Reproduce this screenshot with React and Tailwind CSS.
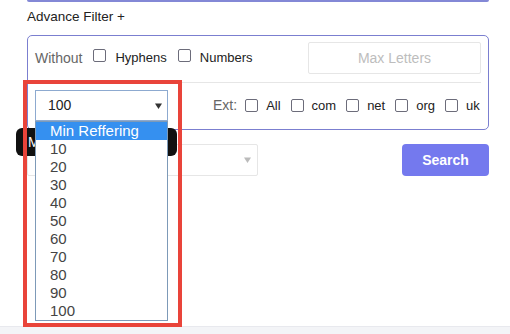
import React from "react";

const exts = ["All", "com", "net", "org", "uk"];
const options = ["Min Reffering", "10", "20", "30", "40", "50", "60", "70", "80", "90", "100"];

function Box() {
  return <span className="inline-block w-[13px] h-[13px] border border-[#6c6c7a] rounded-[2px] bg-white shrink-0" />;
}

function Arrow({ color }) {
  return (
    <svg width="7" height="6" viewBox="0 0 7 6" className="shrink-0">
      <path d="M0 0.5h7L3.5 6z" fill={color} />
    </svg>
  );
}

export default function App() {
  return (
    <div className="relative w-[510px] h-[334px] overflow-hidden bg-white flex flex-col font-['Liberation_Sans',Arial,sans-serif]">
      <div className="flex-1 pl-[27px] pr-[21px]">
        <div className="h-[2px] bg-[#8388d6] rounded-b-[2px]" />
        <div className="mt-[5px] h-[20px] leading-[20px] text-[13.5px] text-[#222]">Advance Filter +</div>

        <div className="mt-[8px] border border-[#7b7fd0] rounded-[5px] pl-[7px] pr-[7px] pt-[6px] pb-[8px]">
          <div className="flex items-center h-[32px] text-[13px]">
            <span className="text-[#666] text-[14px]">Without</span>
            <span className="ml-[11px]"><Box /></span>
            <span className="ml-[9px] text-[#222]">Hyphens</span>
            <span className="ml-[11px]"><Box /></span>
            <span className="ml-[9px] text-[#222]">Numbers</span>
            <div className="ml-auto shrink-0 w-[173px] h-[32px] border border-[#e6e6e6] rounded-[2px] flex items-center justify-center text-[14px] text-[#bdbdbd]">
              Max Letters
            </div>
          </div>
          <div className="mt-[8px] border-t border-[#e6e6e6]" />
          <div className="mt-[7px] flex items-center h-[31px] text-[13px]">
            <div className="shrink-0 w-[133px] h-[31px] border border-[#8daad0] flex items-center justify-between pl-[12px] pr-[5px] text-[14px] text-[#222]">
              <span>100</span>
              <Arrow color="#333" />
            </div>
            <span className="ml-[45px] text-[#666] text-[14px]">Ext:</span>
            {exts.map((e, i) => (
              <span key={e} className={"flex items-center shrink-0 " + (i === 0 ? "ml-[8px]" : "ml-[10px]")}>
                <Box />
                <span className="ml-[8px] text-[#222]">{e}</span>
              </span>
            ))}
          </div>
        </div>

        <div className="mt-[14px] flex justify-between">
          <div className="w-[231px] h-[32px] border border-[#e6e6e6] rounded-[2px] flex items-center justify-end pr-[6px]">
            <Arrow color="#bbb" />
          </div>
          <button className="w-[87px] h-[32px] rounded-[4px] bg-[#7479ee] text-white text-[14px] font-bold">Search</button>
        </div>
      </div>
      <div className="h-[8px] bg-[#f3f4f7] border-t border-[#e8e9ee]" />

      {/* tooltip, mostly hidden behind the open list */}
      <div className="absolute left-[16px] top-[128px] w-[161px] h-[28px] rounded-[6px] bg-[#111] text-white text-[14px] leading-[28px] pl-[12px]">
        M
      </div>

      {/* open select list */}
      <ul className="absolute left-[35px] top-[121px] w-[133px] border border-[#7d9ab8] bg-white text-[15px] text-[#444]">
        {options.map((o, i) => (
          <li key={o} className={"h-[18px] leading-[18px] pl-[14px] " + (i === 0 ? "bg-[#3590f0] text-white" : "")}>
            {o}
          </li>
        ))}
      </ul>

      {/* annotation */}
      <div className="absolute left-[23px] top-[80px] w-[159px] h-[247px] border-[4px] border-[#e9443a]" />
    </div>
  );
}
